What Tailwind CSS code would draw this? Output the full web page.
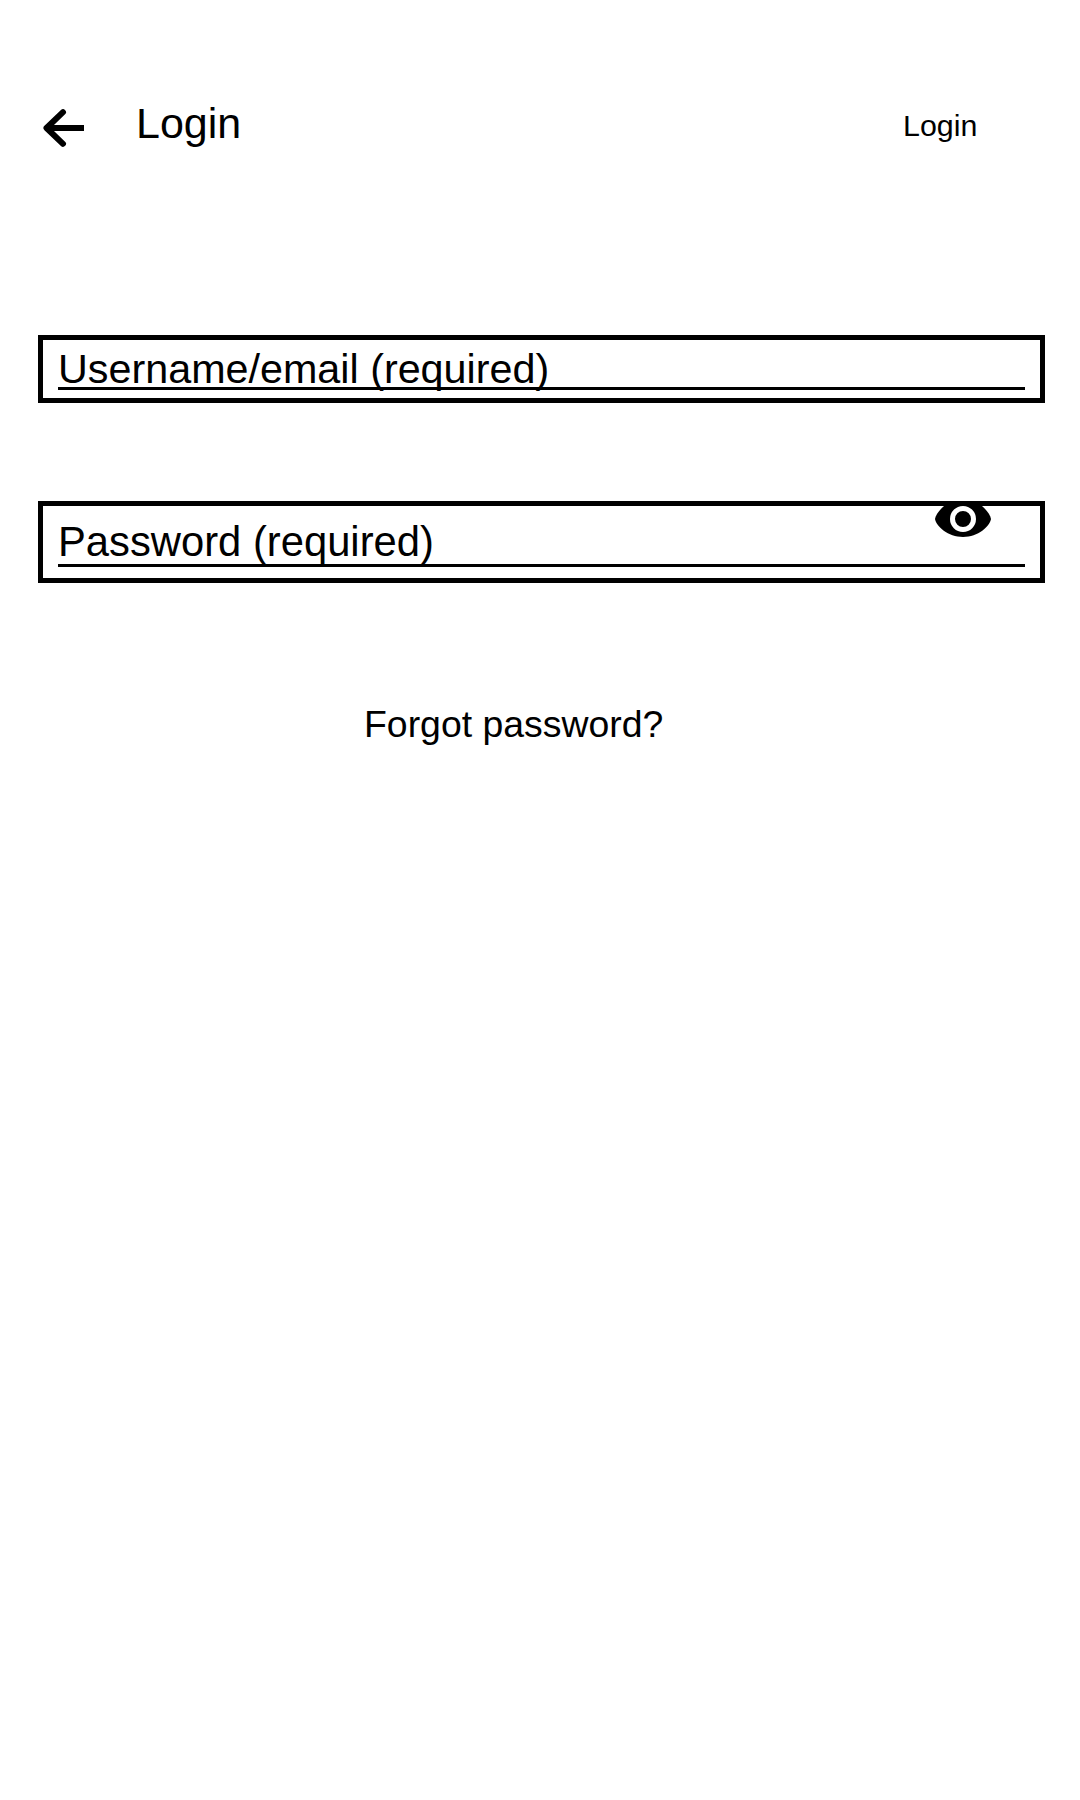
<!DOCTYPE html>
<html lang="en">
<head>
<meta charset="utf-8">
<title>Login</title>
<script src="https://cdn.jsdelivr.net/npm/@tailwindcss/browser@4"></script>
</head>
<body class="bg-white text-black font-['Liberation_Sans',Arial,sans-serif]">
<main class="flex h-[1800px] w-[1080px] flex-col overflow-hidden whitespace-nowrap">
  <header class="flex h-[335px] shrink-0 items-start pt-[99px] pl-[42px]">
    <button class="mt-[9px]" aria-label="Back">
      <svg class="block h-10 w-11" viewBox="0 0 44 40" fill="none" stroke="black" stroke-width="6">
        <path d="M42 20H5"/><path d="M21 4.200L4.500 20L21 35.800" stroke-linecap="round" stroke-linejoin="round"/>
      </svg>
    </button>
    <h1 class="ml-[50px] w-[767px] text-[43px] leading-[48px]">Login</h1>
    <button class="mt-[8px] text-[30.4px] leading-9">Login</button>
  </header>
  <section class="ml-[38px] h-[68px] w-[1007px] shrink-0 border-5 border-black px-[15px]">
    <div class="h-[50px] border-b-3 border-black pt-[8px] text-[41.3px] leading-[42px]">Username/email (required)</div>
  </section>
  <section class="relative mt-[98px] ml-[38px] h-[82px] w-[1007px] shrink-0 overflow-hidden border-5 border-black px-[15px]">
    <div class="h-[61px] border-b-3 border-black pt-[15px] text-[41.75px] leading-[42px]">Password (required)</div>
    <svg class="absolute top-0 left-[892px] h-8 w-[56px]" viewBox="0 12 56 32">
      <path d="M0 25C1 18 14 4 28 4S55 18 56 25C55 32 43 43 28 43S1 32 0 25Z"/>
      <circle cx="28" cy="25" r="10.500" fill="black" stroke="white" stroke-width="5"/>
    </svg>
  </section>
  <button class="mt-[121px] ml-[364px] self-start text-[37.4px] leading-10">Forgot password?</button>
</main>
</body>
</html>
